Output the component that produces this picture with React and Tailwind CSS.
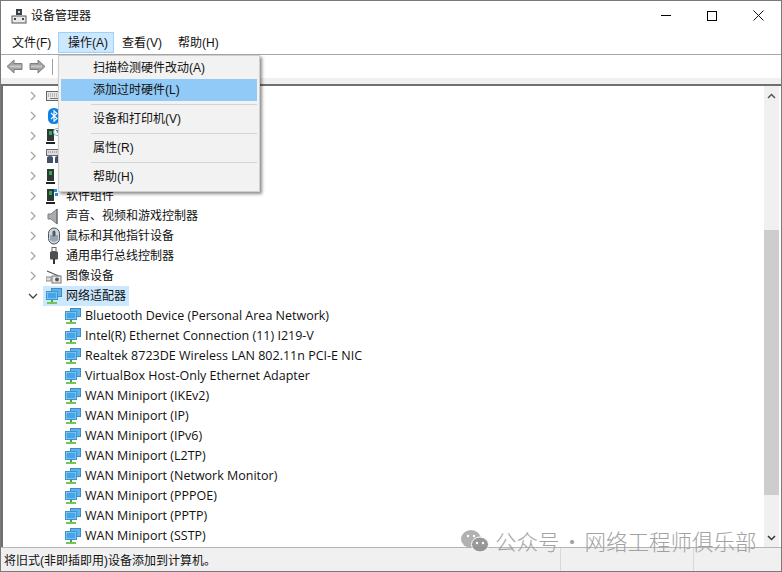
import React from 'react';

const FONT = "font-['Liberation_Sans','Noto_Sans_CJK_SC',sans-serif]";

const NetIcon = () => (
  <svg width="16" height="17" viewBox="0 0 16 17" className="shrink-0">
    <rect x="5.500" y="0.500" width="10" height="8" fill="#5fb3ea" stroke="#3a8ccb" />
    <rect x="0.500" y="3.500" width="11" height="8" fill="#a5dcf8" stroke="#3f93d0" />
    <rect x="1.500" y="4.500" width="9" height="6" fill="#45a5e6" />
    <rect x="5" y="12" width="2" height="2" fill="#4aa83c" />
    <rect x="1" y="14" width="10" height="2" fill="#72c655" />
  </svg>
);

const Keyboard = () => (
  <svg width="16" height="12" viewBox="0 0 16 12">
    <rect x="0.500" y="1.500" width="15" height="9" fill="#e6e6e6" stroke="#666" />
    <path d="M2 4h12M2 6h12" stroke="#888" strokeWidth="1" strokeDasharray="1 1" />
    <rect x="4" y="8" width="8" height="1" fill="#777" />
  </svg>
);

const Bluetooth = () => (
  <svg width="12" height="16" viewBox="0 0 12 16">
    <rect x="0" y="0" width="12" height="16" rx="5.500" fill="#1281e6" />
    <path d="M3 5l6 5.500-3 2.700V2.800l3 2.700L3 11" fill="none" stroke="#fff" strokeWidth="1.100" />
  </svg>
);

const Tower = ({ badge }) => (
  <svg width="16" height="17" viewBox="0 0 16 17">
    <rect x="1" y="1" width="7" height="12" fill="#2d3a33" />
    <rect x="3" y="3" width="3" height="4" fill="#3aa35a" />
    <rect x="0" y="14" width="9" height="2" fill="#222" />
    {badge === 'q' && <circle cx="11" cy="4" r="3.500" fill="#fff" stroke="#8aa" />}
    {badge === 'q' && <path d="M10 3q1-1.500 2 0q0 1-1 1.500v.5" fill="none" stroke="#2b6fb5" />}
    {badge === 'sq' && <rect x="8" y="1" width="3" height="3" fill="#2f8fdc" />}
    {badge === 'sq' && <rect x="12" y="1" width="3" height="3" fill="#2f8fdc" />}
    {badge === 'sq' && <rect x="9" y="5" width="3" height="3" fill="#2f8fdc" />}
  </svg>
);

const Hid = () => (
  <svg width="16" height="16" viewBox="0 0 16 16">
    <rect x="0.500" y="1.500" width="15" height="6" fill="#ddd" stroke="#667" />
    <path d="M2 4h12" stroke="#778" strokeDasharray="1 1" />
    <path d="M1 15V10q0-2 3-2t3 2v5zM9 15V10q0-2 3-2t3 2v5z" fill="#3f5168" />
  </svg>
);

const Speaker = () => (
  <svg width="16" height="17" viewBox="0 0 16 17">
    <path d="M2 6h3l6-5v15l-6-5H2z" fill="#a9adb0" stroke="#7b8085" />
    <path d="M11 1v15" stroke="#5d6266" />
  </svg>
);

const Mouse = () => (
  <svg width="14" height="18" viewBox="0 0 14 18">
    <rect x="1.500" y="1" width="11" height="16" rx="5.500" fill="#cfd6dc" stroke="#4b5560" />
    <path d="M3 8v5q4 3.500 8 0V8z" fill="#9aa5af" />
    <rect x="5.500" y="3.500" width="3" height="6" rx="1.500" fill="#4f5c68" />
  </svg>
);

const Usb = () => (
  <svg width="10" height="18" viewBox="0 0 10 18">
    <rect x="3" y="0.500" width="4" height="4" fill="#fff" stroke="#666" />
    <rect x="1" y="4.500" width="8" height="8" rx="1" fill="#4c4f52" />
    <path d="M5 12v5" stroke="#333" strokeWidth="2" />
  </svg>
);

const Camera = () => (
  <svg width="16" height="16" viewBox="0 0 16 16">
    <path d="M1 3l14 6" stroke="#555" strokeWidth="1.200" />
    <rect x="6" y="8" width="9" height="7" fill="#e8e8e8" stroke="#777" />
    <circle cx="11" cy="11.500" r="2" fill="#555" />
    <rect x="0" y="9" width="5" height="4" fill="#ddd" stroke="#888" />
  </svg>
);

const Chevron = ({ open }) => (
  <svg width="10" height="10" viewBox="0 0 10 10" className="shrink-0">
    {open
      ? <path d="M1 3l4 4 4-4" fill="none" stroke="#444" strokeWidth="1.300" />
      : <path d="M3 1l4 4-4 4" fill="none" stroke="#a6a6a6" strokeWidth="1.300" />}
  </svg>
);

const categories = [
  { label: '', icon: <Keyboard /> },
  { label: '', icon: <Bluetooth /> },
  { label: '', icon: <Tower badge="q" /> },
  { label: '', icon: <Hid /> },
  { label: '', icon: <Tower /> },
  { label: '软件组件', icon: <Tower badge="sq" /> },
  { label: '声音、视频和游戏控制器', icon: <Speaker /> },
  { label: '鼠标和其他指针设备', icon: <Mouse /> },
  { label: '通用串行总线控制器', icon: <Usb /> },
  { label: '图像设备', icon: <Camera /> },
];

const adapters = [
  'Bluetooth Device (Personal Area Network)',
  'Intel(R) Ethernet Connection (11) I219-V',
  'Realtek 8723DE Wireless LAN 802.11n PCI-E NIC',
  'VirtualBox Host-Only Ethernet Adapter',
  'WAN Miniport (IKEv2)',
  'WAN Miniport (IP)',
  'WAN Miniport (IPv6)',
  'WAN Miniport (L2TP)',
  'WAN Miniport (Network Monitor)',
  'WAN Miniport (PPPOE)',
  'WAN Miniport (PPTP)',
  'WAN Miniport (SSTP)',
];

const menuItems = [
  { label: '扫描检测硬件改动(A)' },
  { label: '添加过时硬件(L)', active: true },
  { divider: true },
  { label: '设备和打印机(V)' },
  { divider: true },
  { label: '属性(R)' },
  { divider: true },
  { label: '帮助(H)' },
];

const Arrow = ({ flip }) => (
  <svg width="17" height="15" viewBox="0 0 17 15" className={flip ? '-scale-x-100' : ''}>
    <path d="M1 7.500L8 1v3.500h8v6H8V14z" fill="#a3a3a3" stroke="#808080" />
    <path d="M4 7.500h11" stroke="#c9c9c9" strokeWidth="2" />
  </svg>
);

export default function App() {
  return (
    <div className={`relative w-[782px] h-[572px] flex flex-col overflow-hidden bg-white border border-[#7a7a7a] text-[#111] text-[12px] ${FONT}`}>
      {/* Title bar */}
      <div className="h-[29px] flex items-center shrink-0 pl-[10px]">
        <svg width="16" height="16" viewBox="0 0 16 16">
          <rect x="5" y="1" width="6" height="6" fill="#3a3f44" />
          <rect x="7" y="3" width="2" height="2" fill="#c8d0d8" />
          <rect x="1" y="8" width="14" height="7" fill="#e9e9e9" stroke="#555" />
          <rect x="3" y="10" width="2" height="2" fill="#444" />
          <rect x="11" y="10" width="2" height="2" fill="#444" />
        </svg>
        <span className="ml-[4px] text-[12px]">设备管理器</span>
        <div className="ml-auto flex items-center">
          <div className="w-[46px] flex justify-center">
            <div className="w-[10px] h-px bg-black" />
          </div>
          <div className="w-[46px] flex justify-center">
            <div className="w-[10px] h-[10px] border border-black" />
          </div>
          <div className="w-[46px] flex justify-center">
            <svg width="11" height="11" viewBox="0 0 11 11">
              <path d="M0.500 0.500l10 10M10.500 0.500l-10 10" stroke="#111" />
            </svg>
          </div>
        </div>
      </div>

      {/* Menu bar */}
      <div className="h-[25px] shrink-0 flex items-stretch pl-[3px] pt-[2px] pb-px border-b border-[#a8a8a8]">
        <div className="w-[54px] pl-[8px] flex items-center">文件(F)</div>
        <div className="w-[56px] pl-[9px] flex items-center bg-[#cce8ff] border border-[#99d1ff]">操作(A)</div>
        <div className="w-[56px] pl-[8px] flex items-center">查看(V)</div>
        <div className="pl-[8px] flex items-center">帮助(H)</div>
      </div>

      {/* Toolbar */}
      <div className="h-[23px] shrink-0 flex items-center pl-[5px]">
        <Arrow />
        <div className="ml-[6px]"><Arrow flip /></div>
        <div className="ml-[6px] w-px h-[16px] bg-[#a0a0a0]" />
      </div>
      <div className="h-[6px] shrink-0 bg-[#f0f0f0]" />

      {/* Tree and scrollbar */}
      <div className="flex-1 min-h-0 flex border-t-2 border-l-2 border-[#6f6f6f]">
        <div className="flex-1 min-w-0 overflow-hidden">
          {categories.map((c, i) => (
            <div key={i} className="h-[20px] flex items-center">
              <div className="w-[42px] flex justify-end pr-[7px]"><Chevron /></div>
              <div className="w-[18px] flex justify-center">{c.icon}</div>
              <span className="ml-[3px] text-[12px]">{c.label}</span>
            </div>
          ))}
          <div className="h-[20px] flex items-center">
            <div className="w-[40px] flex justify-start pl-[25px]"><Chevron open /></div>
            <div className="flex items-center h-[20px] bg-[#cce8ff] pl-[3px] pr-[3px]">
              <NetIcon />
              <span className="ml-[4px] text-[12px]">网络适配器</span>
            </div>
          </div>
          {adapters.map((a) => (
            <div key={a} className="h-[20px] flex items-center pl-[62px]">
              <NetIcon />
              <span className="ml-[4px] text-[12.500px] font-['Open_Sans',sans-serif] whitespace-nowrap">{a}</span>
            </div>
          ))}
        </div>
        <div className="w-[15px] mr-[2px] shrink-0 bg-[#f0f0f0] flex flex-col items-center">
          <svg width="9" height="6" viewBox="0 0 9 6" className="mt-[7px]">
            <path d="M1 5l3.500-3.500L8 5" fill="none" stroke="#555" strokeWidth="1.500" />
          </svg>
          <div className="w-full h-[265px] bg-[#cdcdcd] mt-[131px]" />
          <svg width="9" height="6" viewBox="0 0 9 6" className="mt-auto mb-[6px]">
            <path d="M1 1l3.500 3.500L8 1" fill="none" stroke="#333" strokeWidth="1.500" />
          </svg>
        </div>
      </div>

      {/* Status bar */}
      <div className="h-[24px] shrink-0 bg-[#f0f0f0] border-t border-[#b5b5b5] flex items-stretch text-[12px]">
        <div className="w-[559px] pl-[3px] pt-[3px] flex items-center">将旧式(非即插即用)设备添加到计算机。</div>
        <div className="w-[133px] border-l border-[#d8d8d8]" />
        <div className="flex-1 border-l border-[#d8d8d8]" />
      </div>

      {/* Action menu dropdown */}
      <div className="absolute left-[57px] top-[54px] w-[202px] h-[137px] bg-[#f2f2f2] border border-[#cfcfcf] shadow-[2px_2px_3px_rgba(0,0,0,0.45)] py-px px-[2px] text-[12px]">
        {menuItems.map((m, i) =>
          m.divider ? (
            <div key={i} className="h-[7px] flex items-center pl-[30px]">
              <div className="w-full h-px bg-[#d4d4d4]" />
            </div>
          ) : (
            <div key={i} className={`h-[22px] flex items-center pl-[32px] ${m.active ? 'bg-[#91c9f7]' : ''}`}>
              {m.label}
            </div>
          )
        )}
      </div>

      {/* Watermark */}
      <div className="absolute left-[459px] top-[528px] flex items-center gap-[6px] text-[#999] opacity-90">
        <svg width="29" height="24" viewBox="0 0 29 24">
          <ellipse cx="11" cy="10" rx="10" ry="9" fill="#a9a9a9" />
          <ellipse cx="20" cy="15.500" rx="8.500" ry="7.500" fill="#8e8e8e" stroke="#fff" />
          <circle cx="17" cy="14" r="1.200" fill="#fff" />
          <circle cx="23" cy="14" r="1.200" fill="#fff" />
          <circle cx="8" cy="7" r="1.200" fill="#fff" />
          <circle cx="14" cy="7" r="1.200" fill="#fff" />
        </svg>
        <span className="text-[21.500px] leading-none whitespace-nowrap [word-spacing:-3px] font-['Noto_Sans_CJK_SC',sans-serif] font-light">公众号 · 网络工程师俱乐部</span>
      </div>
    </div>
  );
}
